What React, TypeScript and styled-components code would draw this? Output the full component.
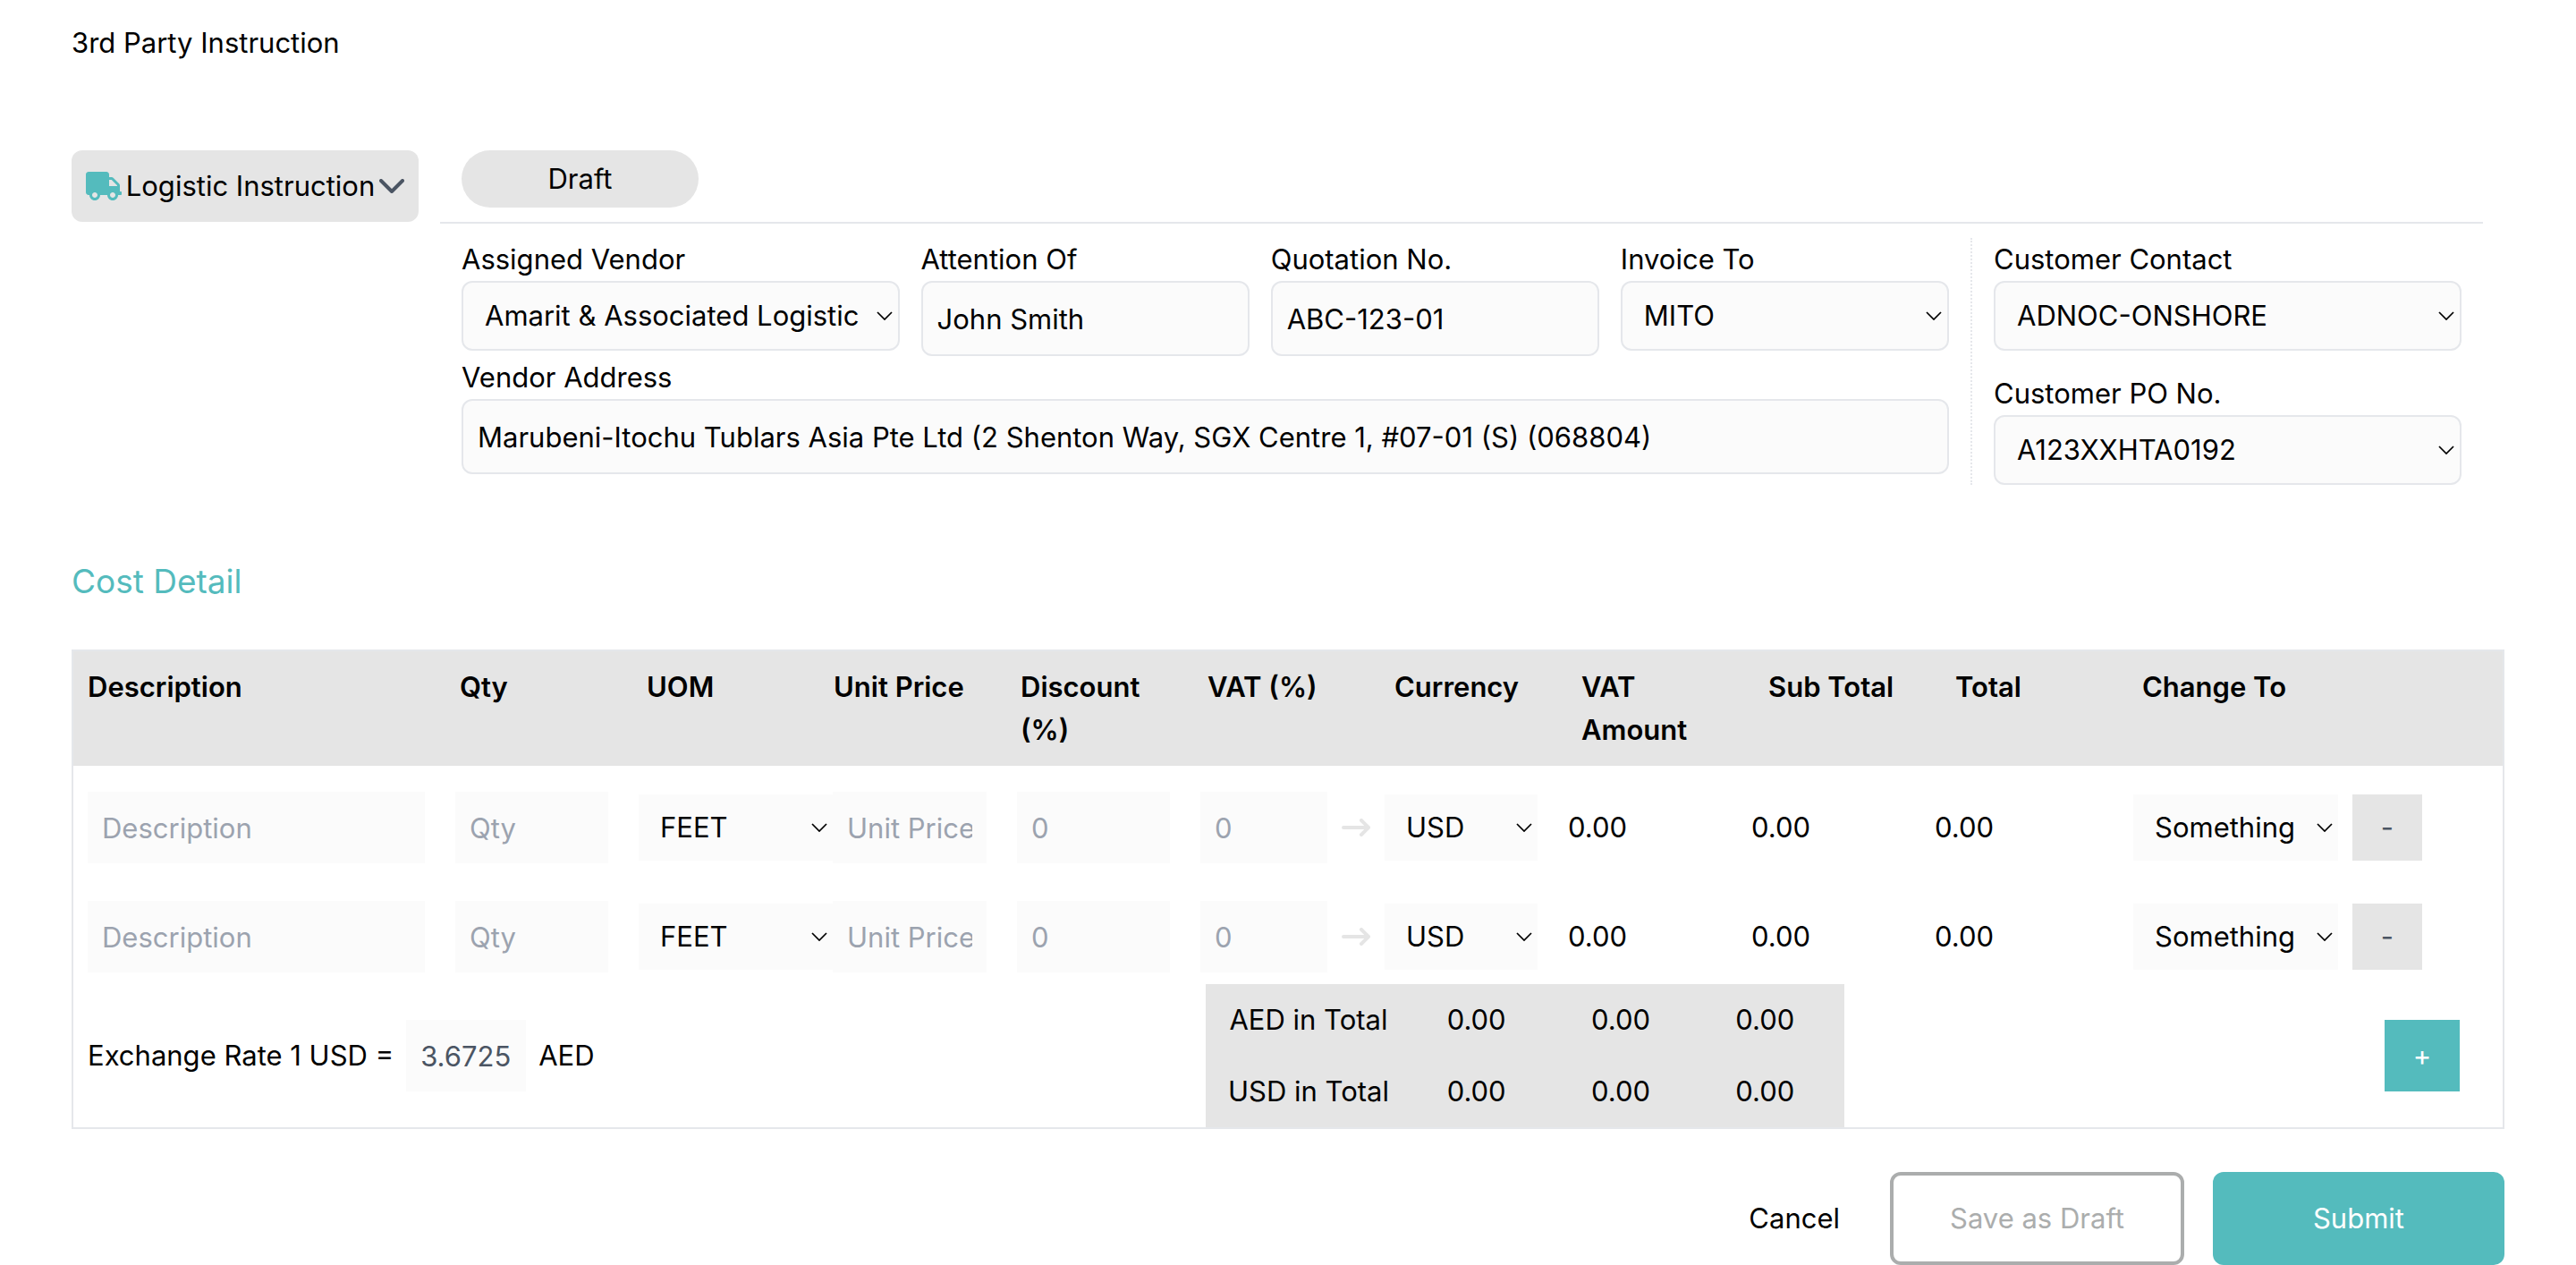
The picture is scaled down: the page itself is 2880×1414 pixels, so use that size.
import React, { useId, useState } from "react";
import styled, { createGlobalStyle, css } from "styled-components";
import { FaTruck } from "react-icons/fa";

const color = {
  teal: "#54bbbd",
  grey: "#e5e5e5",
  line: "#e5e7eb",
  field: "#fbfbfb",
  muted: "#9ca3af",
  slate: "#4b5563",
  outline: "#abadad",
};

const GlobalStyle = createGlobalStyle`
  *, *::before, *::after { box-sizing: border-box; }
  body {
    margin: 0;
    background: #fff;
    color: #000;
    font-family: Inter, Roboto, "Liberation Sans", sans-serif;
    font-size: 31px;
    line-height: 48px;
  }
  button, input, select { font: inherit; color: inherit; margin: 0; }
  input::placeholder { color: ${color.muted}; opacity: 1; }
`;

const Page = styled.main`
  padding: 24px 80px 0;
`;

const PageTitle = styled.h1`
  margin: 0 0 96px;
  font-size: 31px;
  font-weight: 400;
`;

const Top = styled.section`
  display: grid;
  grid-template-columns: minmax(0, 388fr) minmax(0, 2332fr);
  align-items: start;
`;

const TypeButton = styled.button`
  display: flex;
  align-items: center;
  justify-content: space-between;
  height: 80px;
  padding: 0 16px;
  border: 0;
  border-radius: 12px;
  background: ${color.grey};
  white-space: nowrap;
`;

const TruckIcon = styled(FaTruck)`
  width: 40px;
  height: 32px;
  color: ${color.teal};
`;

const Details = styled.div`
  margin: 0 24px;
`;

const StatusBar = styled.div`
  display: flex;
  padding: 0 24px 16px;
  border-bottom: 2px solid ${color.line};
`;

const Status = styled.span`
  width: 265px;
  padding: 8px 0;
  border-radius: 32px;
  background: ${color.grey};
  text-align: center;
`;

const DetailColumns = styled.div`
  display: flex;
  margin-top: 16px;
`;

const VendorGrid = styled.div`
  flex: 1;
  display: grid;
  grid-template-columns: minmax(0, 4fr) repeat(3, minmax(0, 3fr));
  column-gap: 24px;
  align-content: start;
  padding: 0 24px;
`;

const CustomerColumn = styled.div`
  display: flex;
  flex-direction: column;
  gap: 24px;
  flex: 0 0 calc(25% + 2px);
  padding: 0 24px;
  border-left: 2px dotted ${color.line};
`;

const FieldBox = styled.div<{ $wide?: boolean }>`
  display: flex;
  flex-direction: column;
  grid-column: ${(p) => (p.$wide ? "1 / -1" : "auto")};
`;

const outlined = css`
  border: 2px solid ${color.line};
  border-radius: 12px;
`;

const Input = styled.input<{ $outlined?: boolean; $strong?: boolean }>`
  display: block;
  width: 100%;
  height: 80px;
  padding: 0 16px;
  border: 0;
  border-radius: 0;
  background: ${color.field};
  color: ${(p) => (p.$strong ? color.slate : "inherit")};
  ${(p) =>
    p.$outlined &&
    css`
      ${outlined}
      height: 84px;
    `}
`;

const SelectFrame = styled.div`
  display: grid;
  width: 100%;
  align-items: center;

  & > * {
    grid-area: 1 / 1;
  }
`;

const SelectControl = styled.select<{ $outlined?: boolean }>`
  appearance: none;
  width: 100%;
  height: 74px;
  padding: 0 32px 0 24px;
  border: 0;
  border-radius: 0;
  background: ${color.field};
  ${(p) =>
    p.$outlined &&
    css`
      ${outlined}
      height: 78px;
    `}
`;

const SelectArrow = styled.svg<{ $outlined?: boolean }>`
  justify-self: end;
  width: 18px;
  height: 10px;
  margin-right: ${(p) => (p.$outlined ? 8 : 6)}px;
  pointer-events: none;
`;

const SectionTitle = styled.h2`
  margin: 80px 0 48px;
  color: ${color.teal};
  font-size: 37px;
  font-weight: 400;
  line-height: 56px;
`;

const CostPanel = styled.section`
  border: 2px solid ${color.line};
`;

const CostTable = styled.table`
  display: block;

  thead, tbody { display: block; }
  th, td { padding: 0; }
`;

const HeaderRow = styled.tr`
  display: grid;
  grid-template-columns: 416fr repeat(9, 209fr) 387fr;
  padding: 16px;
  background: ${color.grey};
`;

const HeaderCell = styled.th`
  min-width: 0;
  && { padding-right: 32px; }
  font-weight: 600;
  text-align: left;
`;

const CostRow = styled.tr`
  display: grid;
  grid-template-columns:
    411fr 205fr 217fr 206fr 205fr 158fr 48fr
    205fr 205fr 205fr 222fr 245fr 152fr;
  align-items: center;
  padding: 29px 16px 13px;
`;

const Cell = styled.td<{ $gap?: number }>`
  min-width: 0;
  && { padding-right: ${(p) => p.$gap ?? 0}px; }
`;

const ArrowIcon = styled.svg`
  display: block;
  width: 32px;
  height: 20px;
`;

const RemoveButton = styled.button`
  display: block;
  width: 78px;
  height: 74px;
  padding: 0;
  border: 0;
  background: ${color.grey};
  color: ${color.slate};
`;

const PanelFooter = styled.div`
  display: grid;
  grid-template-columns: 1266fr 714fr 736fr;
  align-items: center;
`;

const ExchangeRate = styled.div`
  display: flex;
  align-items: center;
  gap: 14px;
  padding-left: 16px;
`;

const RateInput = styled(Input)`
  width: 134px;
`;

const Totals = styled.div`
  padding: 0 8px;
  background: ${color.grey};
`;

const TotalsTable = styled.table`
  width: 100%;
  table-layout: fixed;
  border-collapse: collapse;
  text-align: center;

  th, td { height: 80px; padding: 0; font-weight: 400; }
  th { width: 214px; }
`;

const AddButton = styled.button`
  justify-self: end;
  width: 84px;
  height: 80px;
  margin-right: 48px;
  padding: 0;
  border: 0;
  background: ${color.teal};
  color: #fff;
`;

const Actions = styled.footer`
  display: flex;
  justify-content: flex-end;
  gap: 32px;
  margin-top: 48px;
`;

const ActionButton = styled.button<{ $kind: "plain" | "outline" | "solid" }>`
  height: 104px;
  min-width: ${(p) => ({ plain: 0, outline: 329, solid: 326 })[p.$kind]}px;
  padding: 0 24px;
  border: ${(p) => (p.$kind === "outline" ? `4px solid ${color.outline}` : 0)};
  border-radius: 12px;
  background: ${(p) => (p.$kind === "solid" ? color.teal : "transparent")};
  color: ${(p) => ({ plain: "#000", outline: color.outline, solid: "#fff" })[p.$kind]};
`;

type SelectProps = {
  options: string[];
  outlined?: boolean;
  id?: string;
  label?: string;
};

function Select({ options, outlined: framed, id, label }: SelectProps) {
  return (
    <SelectFrame>
      <SelectControl id={id} aria-label={label} $outlined={framed}>
        {options.map((o) => (
          <option key={o}>{o}</option>
        ))}
      </SelectControl>
      <SelectArrow
        $outlined={framed}
        viewBox="0 0 18 10"
        fill="none"
        stroke="#000"
        strokeWidth="1.75"
        aria-hidden
      >
        <path d="M1 1l8 8 8-8" />
      </SelectArrow>
    </SelectFrame>
  );
}

function SelectField({ label, options }: { label: string; options: string[] }) {
  const id = useId();
  return (
    <FieldBox>
      <label htmlFor={id}>{label}</label>
      <Select id={id} options={options} outlined />
    </FieldBox>
  );
}

function TextField({ label, value, wide }: { label: string; value: string; wide?: boolean }) {
  const id = useId();
  return (
    <FieldBox $wide={wide}>
      <label htmlFor={id}>{label}</label>
      <Input id={id} type="text" defaultValue={value} $outlined />
    </FieldBox>
  );
}

const headers: { title: string; span?: number }[] = [
  { title: "Description" },
  { title: "Qty" },
  { title: "UOM" },
  { title: "Unit Price" },
  { title: "Discount (%)" },
  { title: "VAT (%)", span: 2 },
  { title: "Currency" },
  { title: "VAT Amount" },
  { title: "Sub Total" },
  { title: "Total" },
  { title: "Change To", span: 2 },
];

function CostLine({ onRemove }: { onRemove: () => void }) {
  return (
    <CostRow>
      <Cell $gap={34}><Input placeholder="Description" aria-label="Description" /></Cell>
      <Cell $gap={34}><Input placeholder="Qty" aria-label="Qty" /></Cell>
      <Cell><Select label="UOM" options={["FEET"]} /></Cell>
      <Cell $gap={34}><Input placeholder="Unit Price" aria-label="Unit Price" /></Cell>
      <Cell $gap={34}><Input placeholder="0" aria-label="Discount (%)" /></Cell>
      <Cell $gap={16}><Input placeholder="0" aria-label="VAT (%)" /></Cell>
      <Cell>
        <ArrowIcon
          viewBox="0 0 32 20"
          fill="none"
          stroke={color.grey}
          strokeWidth="4"
          strokeLinecap="round"
          strokeLinejoin="round"
          aria-hidden
        >
          <path d="M2 10h28M22 2l8 8-8 8" />
        </ArrowIcon>
      </Cell>
      <Cell $gap={34}><Select label="Currency" options={["USD"]} /></Cell>
      <Cell>0.00</Cell>
      <Cell>0.00</Cell>
      <Cell>0.00</Cell>
      <Cell $gap={16}><Select label="Change To" options={["Something"]} /></Cell>
      <Cell><RemoveButton type="button" aria-label="Remove line" onClick={onRemove}>-</RemoveButton></Cell>
    </CostRow>
  );
}

export default function App() {
  const [lines, setLines] = useState([1, 2]);

  return (
    <>
      <GlobalStyle />
      <Page>
        <PageTitle>3rd Party Instruction</PageTitle>

        <Top>
          <TypeButton type="button">
            <TruckIcon />
            <span>Logistic Instruction</span>
            <svg
              width="28"
              height="16"
              viewBox="0 0 28 16"
              fill="none"
              stroke={color.slate}
              strokeWidth="4"
              strokeLinecap="round"
              strokeLinejoin="round"
              aria-hidden
            >
              <path d="M2 2l12 12L26 2" />
            </svg>
          </TypeButton>

          <Details>
            <StatusBar>
              <Status>Draft</Status>
            </StatusBar>
            <DetailColumns>
              <VendorGrid>
                <SelectField label="Assigned Vendor" options={["Amarit & Associated Logistic"]} />
                <TextField label="Attention Of" value="John Smith" />
                <TextField label="Quotation No." value="ABC-123-01" />
                <SelectField label="Invoice To" options={["MITO"]} />
                <TextField
                  wide
                  label="Vendor Address"
                  value="Marubeni-Itochu Tublars Asia Pte Ltd (2 Shenton Way, SGX Centre 1, #07-01 (S) (068804)"
                />
              </VendorGrid>
              <CustomerColumn>
                <SelectField label="Customer Contact" options={["ADNOC-ONSHORE"]} />
                <SelectField label="Customer PO No." options={["A123XXHTA0192"]} />
              </CustomerColumn>
            </DetailColumns>
          </Details>
        </Top>

        <SectionTitle>Cost Detail</SectionTitle>

        <CostPanel>
          <CostTable>
            <thead>
              <HeaderRow>
                {headers.map((h) => (
                  <HeaderCell key={h.title} scope="col" colSpan={h.span}>
                    {h.title}
                  </HeaderCell>
                ))}
              </HeaderRow>
            </thead>
            <tbody>
              {lines.map((id) => (
                <CostLine key={id} onRemove={() => setLines(lines.filter((l) => l !== id))} />
              ))}
            </tbody>
          </CostTable>

          <PanelFooter>
            <ExchangeRate>
              <label htmlFor="rate">Exchange Rate 1 USD =</label>
              <RateInput id="rate" defaultValue="3.6725" $strong />
              <span>AED</span>
            </ExchangeRate>
            <Totals>
              <TotalsTable>
                <tbody>
                  {["AED in Total", "USD in Total"].map((name) => (
                    <tr key={name}>
                      <th scope="row">{name}</th>
                      <td>0.00</td>
                      <td>0.00</td>
                      <td>0.00</td>
                    </tr>
                  ))}
                </tbody>
              </TotalsTable>
            </Totals>
            <AddButton
              type="button"
              aria-label="Add line"
              onClick={() => setLines([...lines, Math.max(0, ...lines) + 1])}
            >
              +
            </AddButton>
          </PanelFooter>
        </CostPanel>

        <Actions>
          <ActionButton type="button" $kind="plain">Cancel</ActionButton>
          <ActionButton type="button" $kind="outline">Save as Draft</ActionButton>
          <ActionButton type="submit" $kind="solid">Submit</ActionButton>
        </Actions>
      </Page>
    </>
  );
}
